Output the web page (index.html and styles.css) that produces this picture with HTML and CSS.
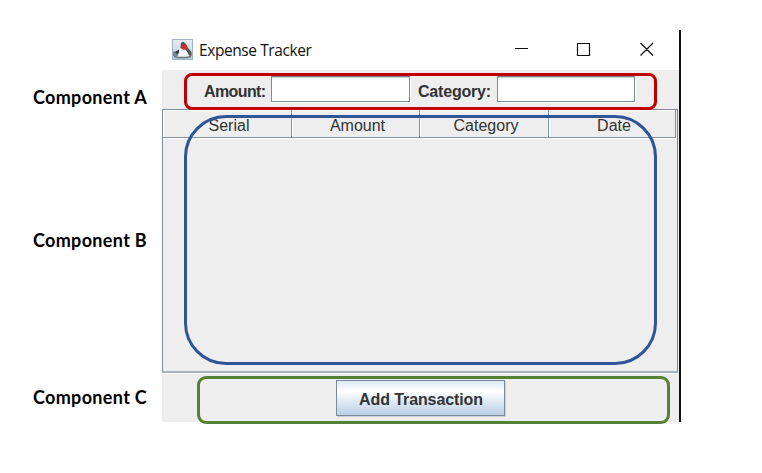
FILE: index.html
```html
<!DOCTYPE html>
<html lang="en">
<head>
<meta charset="utf-8">
<title>Expense Tracker</title>
<link rel="stylesheet" href="styles.css">
</head>
<body>
<main class="figure">
  <div class="labels">
    <div class="label label-a">Component A</div>
    <div class="label label-b">Component B</div>
    <div class="label label-c">Component C</div>
  </div>
  <section class="window">
    <header class="titlebar">
      <svg class="app-icon" viewBox="0 0 21 21">
        <defs><linearGradient id="sky" x1="0" y1="0" x2="0" y2="1"><stop offset="0" stop-color="#e9eff3"/><stop offset="1" stop-color="#b9c9d5"/></linearGradient></defs>
        <rect x=".5" y=".5" width="20" height="20" fill="url(#sky)" stroke="#9fb3c1"/>
        <path d="M1 12.500H6V17H1Z" fill="#6f899b"/>
        <path d="M3 13L7 10.500L8 14L5 15Z" fill="#343a40"/>
        <path d="M9 4L11 2.500L14 5L16 9L19.500 13V17L15 16L8 12Z" fill="#505458"/>
        <path d="M8 9L13 10L16 14L17 17L14 18.500H6L7 13Z" fill="#f4f5f4"/>
        <path d="M2 17.500L6 18.500H15L19 17.500" fill="none" stroke="#66757f" stroke-width="1.300"/>
        <circle cx="12" cy="8" r="2.800" fill="#d82928"/>
      </svg>
      <h1 class="title">Expense Tracker</h1>
      <svg class="controls" viewBox="0 0 140 16" fill="none" stroke="#111" stroke-width="1.2">
        <path d="M0 7.500H13M62.500 2.500H74.500V14.500H62.500ZM125.500 2L138 14.500M138 2L125.500 14.500"/>
      </svg>
    </header>
    <form class="form">
      <label class="field-label amount">Amount:</label><span class="input"></span>
      <label class="field-label category">Category:</label><span class="input"></span>
    </form>
    <div class="table">
      <div class="thead">
        <div class="th"><span>Serial</span></div>
        <div class="th"><span>Amount</span></div>
        <div class="th"><span>Category</span></div>
        <div class="th"><span>Date</span></div>
      </div>
    </div>
    <footer class="actions"><button class="add" type="button"><span>Add Transaction</span></button></footer>
  </section>
  <div class="outline outline-a"></div>
  <div class="outline outline-b"></div>
  <div class="outline outline-c"></div>
</main>
</body>
</html>
```
FILE: styles.css
```css
* { box-sizing: border-box; }
body { margin: 0; background: #fff; }
.figure {
  position: relative;
  width: 762px;
  height: 473px;
  overflow: hidden;
  display: grid;
  grid-template-columns: 162px 519px;
  padding-top: 30px;
}
.labels { padding-left: 33px; white-space: nowrap; }
.label {
  height: 24px;
  font: 700 18px/24px Lato, sans-serif;
  letter-spacing: 0.33px;
  color: #000;
}
.label-a { margin-top: 55px; }
.label-b { margin-top: 119px; }
.label-c { margin-top: 133px; }
.window {
  height: 392px;
  display: flex;
  flex-direction: column;
  background: #eee;
  border-right: 2px solid #111;
  font-family: "Liberation Sans", sans-serif;
  color: #333;
}
.titlebar {
  height: 40px;
  display: flex;
  align-items: center;
  padding-left: 10px;
  background: #fff;
}
.app-icon { width: 21px; height: 21px; position: relative; top: -1px; }
.title {
  margin: 0 0 0 6px;
  width: 163px;
  font: 400 15.5px/24px "Open Sans", sans-serif;
  letter-spacing: -0.42px;
  color: #111;
  white-space: nowrap;
}
.controls { width: 140px; height: 16px; margin-left: 153px; position: relative; top: -1px; }
.form { height: 39px; display: flex; padding: 6px 0 0 42px; }
.field-label { font-weight: 700; font-size: 16px; line-height: 31px; white-space: nowrap; }
.amount { width: 67px; letter-spacing: -0.6px; }
.category { width: 79px; margin-left: 8px; letter-spacing: -0.2px; }
.input {
  width: 139px;
  height: 26px;
  background: #fff;
  border: 1px solid #7a8a99;
  box-shadow: 1px 1px #fff, inset 0 1px #c3cbd3;
}
.input:last-child { width: 138px; }
.table {
  height: 264px;
  width: 516px;
  border: 1px solid #7a8a99;
  border-bottom: 2px solid #a7b1c1;
  box-shadow: 0 1px #fff;
}
.thead { display: grid; grid-template: 28px / 129px 128px 129px 127px; }
.th {
  border-right: 1px solid #8293a2;
  border-bottom: 1px solid #8293a2;
  box-shadow: inset 1px 1px #fff, 0 1px #fff;
  font-size: 16px;
  line-height: 31px;
  text-align: center;
}
.th span { position: relative; left: 2px; }
.actions { height: 49px; display: flex; justify-content: center; align-items: flex-start; padding: 7px 0 0 0; }
.add {
  width: 169px;
  height: 36px;
  padding: 3px 0 0 1px;
  border: 1px solid #7a8a99;
  background: linear-gradient(#dde8f3, #fff 30%, #e4edf5 55%, #b8cfe5);
  box-shadow: 1px 1px #c9d2da;
  font: 700 16px/31px "Liberation Sans", sans-serif;
  letter-spacing: -0.1px;
  color: #333;
}
.outline { position: absolute; border: 3px solid; }
.outline-a { left: 184px; top: 73px; width: 473px; height: 37px; border-color: #c00000; border-radius: 8px; }
.outline-b { left: 184px; top: 115px; width: 473px; height: 250px; border-color: #2f5597; border-radius: 42px; }
.outline-c { left: 197px; top: 376px; width: 473px; height: 48px; border-color: #548235; border-radius: 9px; }
```
